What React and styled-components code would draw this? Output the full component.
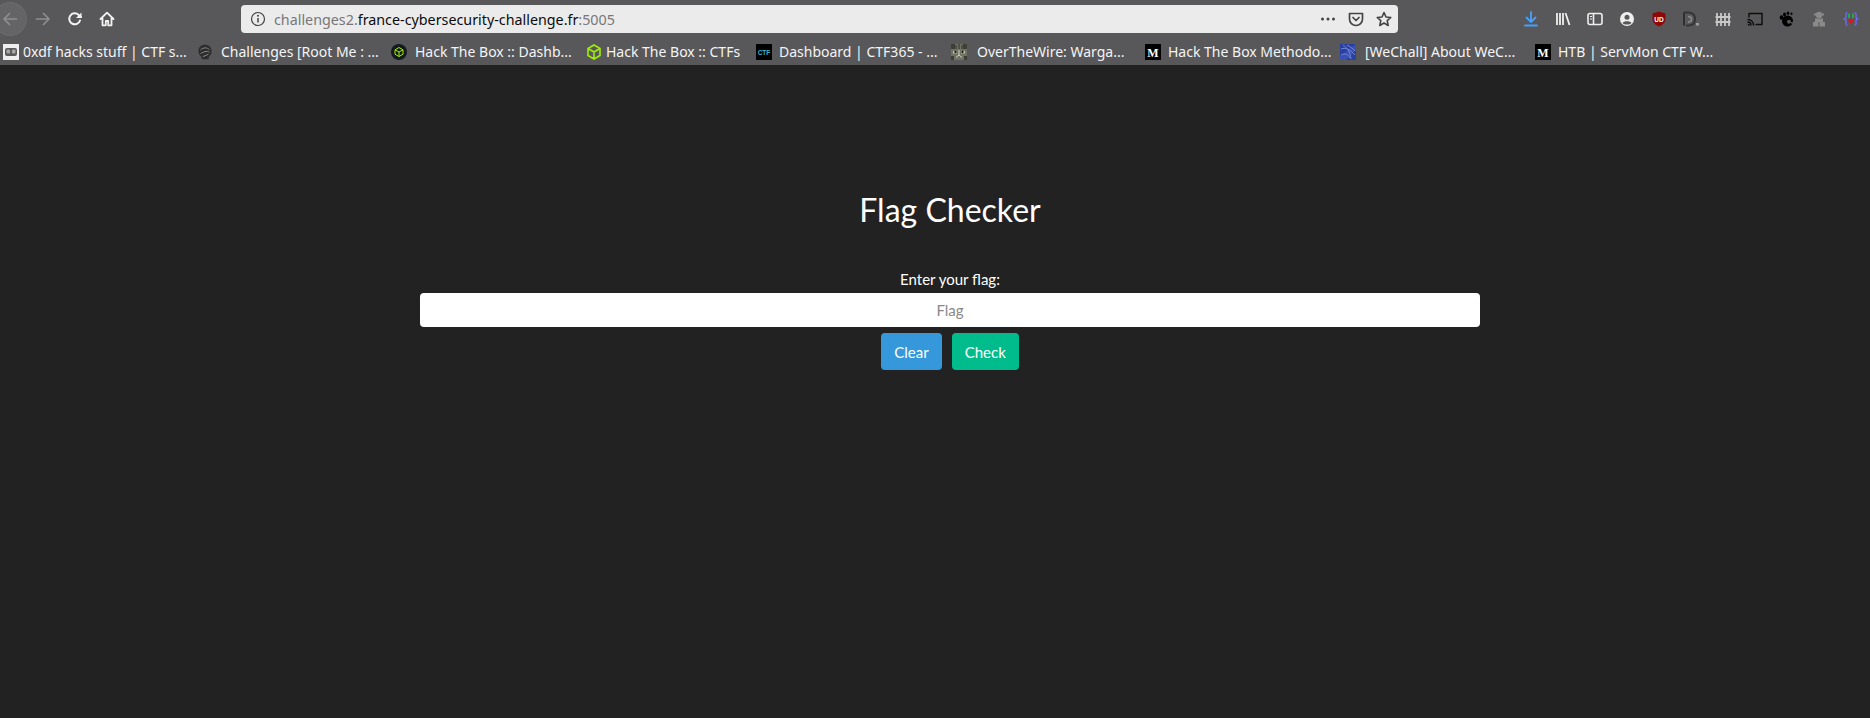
import React from 'react';
import styled, { createGlobalStyle } from 'styled-components';

const GlobalStyle = createGlobalStyle`
	html, body {
		margin: 0;
		padding: 0;
		height: 100%;
		background: #222222;
	}
	#root {
		height: 100%;
	}
`;
const Page = styled.div`
	height: 718px;
	display: flex;
	flex-direction: column;
	overflow: hidden;
`;
const Chrome = styled.header`
	flex: 0 0 65px;
	background: #58585a;
	font-family: 'Noto Sans', sans-serif;
`;
const Toolbar = styled.div`
	height: 38px;
	display: flex;
	align-items: center;
`;
const NavGroup = styled.nav`
	flex: 0 0 241px;
	display: flex;
	align-items: center;
	margin-left: -6px;
`;
const NavButton = styled.div`
	width: 32px;
	height: 32px;
	margin-right: ${(p) => (p.$first ? '1px' : '0')};
	border-radius: 50%;
	display: flex;
	align-items: center;
	justify-content: center;
	background: ${(p) => (p.$first ? '#646466' : 'transparent')};
	box-shadow: ${(p) => (p.$first ? '0 0 0 1px #6b6b6d' : 'none')};
`;
const AddressBar = styled.div`
	flex: 0 0 1157px;
	height: 28px;
	margin-left: 6px;
	background: #ebebeb;
	border-radius: 4px;
	display: flex;
	align-items: center;
	padding: 0 6px 0 9px;
	box-sizing: border-box;
`;
const Url = styled.div`
	flex: 1;
	margin-left: 8px;
	font-size: 14.3px;
	color: #77777a;
	white-space: nowrap;
	b {
		font-weight: 400;
		color: #0c0c0d;
	}
`;
const BarIcons = styled.div`
	display: flex;
	align-items: center;
	gap: 12px;
`;
const ExtGroup = styled.div`
	margin-left: auto;
	padding-right: 3px;
	display: flex;
`;
const ExtIcon = styled.div`
	width: 32px;
	height: 38px;
	display: flex;
	align-items: center;
	justify-content: center;
`;
const Bookmarks = styled.div`
	height: 27px;
	display: flex;
	align-items: center;
	padding-left: 3px;
`;
const Bookmark = styled.div`
	flex: 0 0 ${(p) => p.$width}px;
	display: flex;
	align-items: center;
	font-size: 14px;
	color: #f4f4f5;
	white-space: nowrap;
	overflow: hidden;
`;
const Favicon = styled.svg`
	flex: 0 0 16px;
	width: 16px;
	height: 16px;
	margin-right: ${(p) => p.$gap || 6}px;
`;
const Main = styled.main`
	flex: 1;
	display: flex;
	flex-direction: column;
	align-items: center;
	padding: 122px 0 0 30px;
	font-family: Lato, sans-serif;
	color: #ffffff;
`;
const Title = styled.h1`
	margin: 0 0 38px;
	font-size: 32px;
	line-height: 45px;
	font-weight: 400;
`;
const Label = styled.label`
	font-size: 15px;
	line-height: 18px;
	margin-bottom: 5px;
`;
const FlagInput = styled.input`
	width: 1060px;
	height: 34px;
	box-sizing: border-box;
	border: 0;
	border-radius: 4px;
	background: #ffffff;
	text-align: center;
	font-family: Lato, sans-serif;
	font-size: 15px;
	padding: 0;
	margin-bottom: 6px;
	&::placeholder {
		color: #888888;
		opacity: 1;
	}
`;
const Actions = styled.div`
	display: flex;
	gap: 10px;
`;
const Button = styled.button`
	height: 37px;
	padding: 0 13px;
	border: 0;
	border-radius: 4px;
	color: #ffffff;
	font-family: Lato, sans-serif;
	font-size: 15px;
	background: ${(p) => (p.$tone === 'info' ? '#3498db' : '#00bc8c')};
`;

const stroke = { fill: 'none', strokeLinecap: 'round', strokeLinejoin: 'round' };

const Glyph = ({ size = 16, children }) => (
	<svg width={size} height={size} viewBox="0 0 16 16">
		{children}
	</svg>
);

const BookmarkList = [
	{
		width: 194,
		gap: 4,
		text: '0xdf hacks stuff | CTF s...',
		icon: (
			<>
				<rect width="16" height="16" fill="#efefef" />
				<rect x="2" y="4" width="12" height="8" rx="2" fill="#5a5a5a" />
				<rect x="3.500" y="5.500" width="3.500" height="4" rx="1" fill="#a8a8a8" />
				<rect x="9" y="5.500" width="3.500" height="4" rx="1" fill="#a8a8a8" />
			</>
		),
	},
	{
		width: 194,
		gap: 8,
		text: 'Challenges [Root Me : ...',
		icon: (
			<>
				<path d="M8 .8c4 0 6.500 2.500 6.500 6.200 0 3-1.200 4.500-2.500 5.500l-.5 2.700H5l-.8-2.700C2.500 11.300 1.500 9.500 1.500 7 1.500 3.300 4 .8 8 .8z" fill="#2c2c2c" />
				<path d="M3.500 6c3-3 6.500-2.500 9-.5M3.500 9.500c3-1.500 6-3 9-1.500M6 12.500c2-.5 4-1.500 5.500-2.500" stroke="#8c8c8c" fill="none" />
			</>
		),
	},
	{
		width: 195,
		gap: 8,
		text: 'Hack The Box :: Dashb...',
		icon: (
			<>
				<circle cx="8" cy="8" r="8" fill="#14191f" />
				<path d="M8 3.500 12 5.800v4.400L8 12.500 4 10.200V5.800zM4 5.800 8 8l4-2.200M8 8v4.500" stroke="#9fef00" fill="none" />
			</>
		),
	},
	{
		width: 170,
		gap: 4,
		text: 'Hack The Box :: CTFs',
		icon: <path d="M8 1 14 4.500v7L8 15 2 11.500v-7zM2 4.500 8 8l6-3.500M8 8v7" stroke="#9fef00" strokeWidth="1.600" fill="none" />,
	},
	{
		width: 195,
		gap: 7,
		text: 'Dashboard | CTF365 - ...',
		icon: (
			<>
				<rect width="16" height="16" fill="#000" />
				<text x="8" y="10.500" fontSize="6.500" fontWeight="700" textAnchor="middle" fill="#3fb6c8" fontFamily="Liberation Sans, sans-serif">
					CTF
				</text>
			</>
		),
	},
	{
		width: 194,
		gap: 10,
		text: 'OverTheWire: Warga...',
		icon: (
			<>
				<rect width="16" height="16" fill="#6f7262" />
				<path d="M0 0h4v5H0zM12 0h4v5h-4zM0 12h3v4H0zM13 12h3v4h-3z" fill="#3d3f34" />
				<path d="M5 1v4M8 0v5M11 1v4" stroke="#2f3028" />
				<path d="M2 7h4v2.500H2zM10 7h4v2.500h-4z" fill="#c3c5b2" />
				<circle cx="4.500" cy="8" r="1.200" fill="#1f2019" />
				<circle cx="11.500" cy="8" r="1.200" fill="#1f2019" />
				<path d="M8 6v5M5 13.500l3-2.500 3 2.500" stroke="#d0d2c0" fill="none" />
			</>
		),
	},
	{
		width: 195,
		gap: 7,
		text: 'Hack The Box Methodo...',
		icon: (
			<>
				<rect width="16" height="16" fill="#000" />
				<text x="8" y="12.500" fontSize="12" fontWeight="700" textAnchor="middle" fill="#fff" fontFamily="Liberation Serif, serif">
					M
				</text>
			</>
		),
	},
	{
		width: 195,
		gap: 9,
		text: '[WeChall] About WeC...',
		icon: (
			<>
				<rect width="16" height="16" fill="#2a3f9e" />
				<path d="M0 12 16 0v6L6 16H0z" fill="#3a50b4" />
				<path d="M1 5c5-2 9 1 14 6M3 1c4 3 7 6 8 14M1 11c4-2 7-1 9 3M7 1c3 2 6 3 8 6" stroke="#7488d8" fill="none" />
			</>
		),
	},
	{
		width: 185,
		gap: 7,
		text: 'HTB | ServMon CTF W...',
		icon: (
			<>
				<rect width="16" height="16" fill="#000" />
				<text x="8" y="12.500" fontSize="12" fontWeight="700" textAnchor="middle" fill="#fff" fontFamily="Liberation Serif, serif">
					M
				</text>
			</>
		),
	},
];

export default function App() {
	return (
		<Page>
			<GlobalStyle />
			<Chrome>
				<Toolbar>
					<NavGroup>
						<NavButton $first>
							<Glyph>
								<path d="M14.500 8H2M7.500 2.500 2 8l5.500 5.500" stroke="#8e8e90" strokeWidth="1.700" {...stroke} />
							</Glyph>
						</NavButton>
						<NavButton>
							<Glyph>
								<path d="M1.500 8H14M8.500 2.500 14 8l-5.500 5.500" stroke="#8e8e90" strokeWidth="1.700" {...stroke} />
							</Glyph>
						</NavButton>
						<NavButton>
							<Glyph>
								<path d="M13 9.500A5.500 5.500 0 1 1 11.500 3.800L14 6" stroke="#f2f2f2" strokeWidth="2" {...stroke} />
								<path d="M14.500 1.500V7H9z" fill="#f2f2f2" />
							</Glyph>
						</NavButton>
						<NavButton>
							<Glyph>
								<path d="M1.500 8 8 1.700 14.500 8M3.500 7v7.300h3.300V10h2.400v4.300h3.300V7" stroke="#f2f2f2" strokeWidth="1.800" {...stroke} />
							</Glyph>
						</NavButton>
					</NavGroup>
					<AddressBar>
						<Glyph>
							<circle cx="8" cy="8" r="6.500" stroke="#444" strokeWidth="1.200" fill="none" />
							<path d="M8 7v4.500" stroke="#444" strokeWidth="1.500" />
							<circle cx="8" cy="4.800" r="1" fill="#444" />
						</Glyph>
						<Url>
							challenges2.<b>france-cybersecurity-challenge.fr</b>:5005
						</Url>
						<BarIcons>
							<Glyph>
								<circle cx="2.500" cy="8" r="1.500" fill="#444" />
								<circle cx="8" cy="8" r="1.500" fill="#444" />
								<circle cx="13.500" cy="8" r="1.500" fill="#444" />
							</Glyph>
							<Glyph>
								<path d="M1.500 2.500h13v5.500a6.500 6.500 0 0 1-13 0z" stroke="#444" strokeWidth="1.700" {...stroke} />
								<path d="M5 6.500 8 9.500l3-3" stroke="#444" strokeWidth="1.700" {...stroke} />
							</Glyph>
							<Glyph>
								<path d="M8 1.500 10 6l4.800.5-3.600 3.200 1 4.800L8 12l-4.200 2.500 1-4.800L1.200 6.500 6 6z" stroke="#444" strokeWidth="1.600" {...stroke} />
							</Glyph>
						</BarIcons>
					</AddressBar>
					<ExtGroup>
						<ExtIcon>
							<Glyph>
								<path d="M8 1v9.500M3.500 6.500 8 11l4.500-4.500M2 14.500h12" stroke="#45a1ff" strokeWidth="1.800" {...stroke} />
							</Glyph>
						</ExtIcon>
						<ExtIcon>
							<Glyph>
								<path d="M2 2v12M5 2v12M8 2v12M10.500 2 14.500 14" stroke="#efefef" strokeWidth="1.800" fill="none" />
							</Glyph>
						</ExtIcon>
						<ExtIcon>
							<Glyph>
								<rect x="1" y="2.500" width="14" height="11" rx="2" stroke="#efefef" strokeWidth="1.600" fill="none" />
								<path d="M6.500 2.500v11" stroke="#efefef" strokeWidth="1.600" />
								<path d="M3 5.500h2M3 8h2" stroke="#efefef" />
							</Glyph>
						</ExtIcon>
						<ExtIcon>
							<Glyph>
								<circle cx="8" cy="8" r="7" fill="#efefef" />
								<circle cx="8" cy="6.300" r="2.500" fill="#58585a" />
								<path d="M3.500 12c1-2.200 8-2.200 9 0-2 2-7 2-9 0z" fill="#58585a" />
							</Glyph>
						</ExtIcon>
						<ExtIcon>
							<Glyph>
								<path d="M8 .5 14.500 2.500V8c0 3.500-3 6-6.500 7.500C4.500 14 1.500 11.500 1.500 8V2.500z" fill="#8f0808" />
								<text x="8" y="10.500" fontSize="6.500" fontWeight="700" textAnchor="middle" fill="#fff" fontFamily="Liberation Sans, sans-serif">
									UD
								</text>
							</Glyph>
						</ExtIcon>
						<ExtIcon>
							<Glyph>
								<path d="M1 1.500v13" stroke="#2f2f2f" strokeWidth="2" />
								<path d="M1 1.500h4c5 0 7 3 7 6.500s-2 6.500-7 6.500H3" stroke="#343434" strokeWidth="2" fill="none" />
								<path d="M5 5.500c2.500 0 3.500 1 3.500 2.500S7.500 11 5 11" stroke="#8a8a8a" strokeWidth="1.500" fill="none" />
								<rect x="13" y="12" width="3" height="2.500" fill="#9a9a9a" />
							</Glyph>
						</ExtIcon>
						<ExtIcon>
							<Glyph>
								<path d="M2 2v13M6 2v13M10 2v13M14 2v13M0.500 6h15M0.500 11h15" stroke="#c8c8c8" strokeWidth="1.800" fill="none" />
							</Glyph>
						</ExtIcon>
						<ExtIcon>
							<Glyph>
								<path d="M2 6V2.500h13v11H9" stroke="#0c0c0d" strokeWidth="1.400" {...stroke} />
								<path d="M1 8.500c3 0 5.500 2.500 5.500 5.500M1 11c1.700 0 3 1.300 3 3" stroke="#0c0c0d" strokeWidth="1.400" {...stroke} />
								<circle cx="1.800" cy="13.700" r="1" fill="#0c0c0d" />
							</Glyph>
						</ExtIcon>
						<ExtIcon>
							<Glyph>
								<ellipse cx="8.500" cy="10" rx="5.500" ry="5.500" fill="#000" />
								<circle cx="10" cy="10.800" r="2" fill="#58585a" />
								<path d="M12 11h3v1.500h-3z" fill="#58585a" />
								<ellipse cx="2.500" cy="6.500" rx="1.800" ry="2.200" fill="#000" />
								<ellipse cx="5.500" cy="3.500" rx="1.500" ry="2" fill="#000" />
								<ellipse cx="9" cy="2.300" rx="1.300" ry="1.700" fill="#000" />
								<ellipse cx="12.500" cy="2.800" rx="1" ry="1.300" fill="#000" />
							</Glyph>
						</ExtIcon>
						<ExtIcon>
							<Glyph>
								<circle cx="8" cy="4" r="3.200" fill="#8a8a8a" />
								<rect x="3" y="2.500" width="10" height="2" fill="#8a8a8a" />
								<rect x="4" y="7.500" width="8" height="3.500" fill="#8a8a8a" />
								<rect x="2" y="11" width="5.500" height="4.500" fill="#8a8a8a" />
								<rect x="8.500" y="11" width="5.500" height="4.500" fill="#8a8a8a" />
							</Glyph>
						</ExtIcon>
						<ExtIcon>
							<Glyph>
								<path d="M4.500 1.500C2.500 1.500 3 4 3 6c0 1.500-1.500 2-1.500 2S3 8.500 3 10c0 2-.5 4.500 1.500 4.500M11.500 1.500c2 0 1.500 2.500 1.500 4.500 0 1.500 1.500 2 1.500 2s-1.500.5-1.500 2c0 2 .5 4.500-1.500 4.500" stroke="#6a6af0" strokeWidth="1.500" fill="none" />
								<path d="M6 2.500v4.500M10 2.500v4.500" stroke="#22a84a" strokeWidth="2" />
								<path d="M4.800 8.500h6.400L8 13z" fill="#e8101a" />
							</Glyph>
						</ExtIcon>
					</ExtGroup>
				</Toolbar>
				<Bookmarks>
					{BookmarkList.map((item) => (
						<Bookmark key={item.text} $width={item.width}>
							<Favicon viewBox="0 0 16 16" $gap={item.gap}>
								{item.icon}
							</Favicon>
							{item.text}
						</Bookmark>
					))}
				</Bookmarks>
			</Chrome>
			<Main>
				<Title>Flag Checker</Title>
				<Label htmlFor="flag">Enter your flag:</Label>
				<FlagInput id="flag" placeholder="Flag" />
				<Actions>
					<Button $tone="info">Clear</Button>
					<Button $tone="success">Check</Button>
				</Actions>
			</Main>
		</Page>
	);
}
